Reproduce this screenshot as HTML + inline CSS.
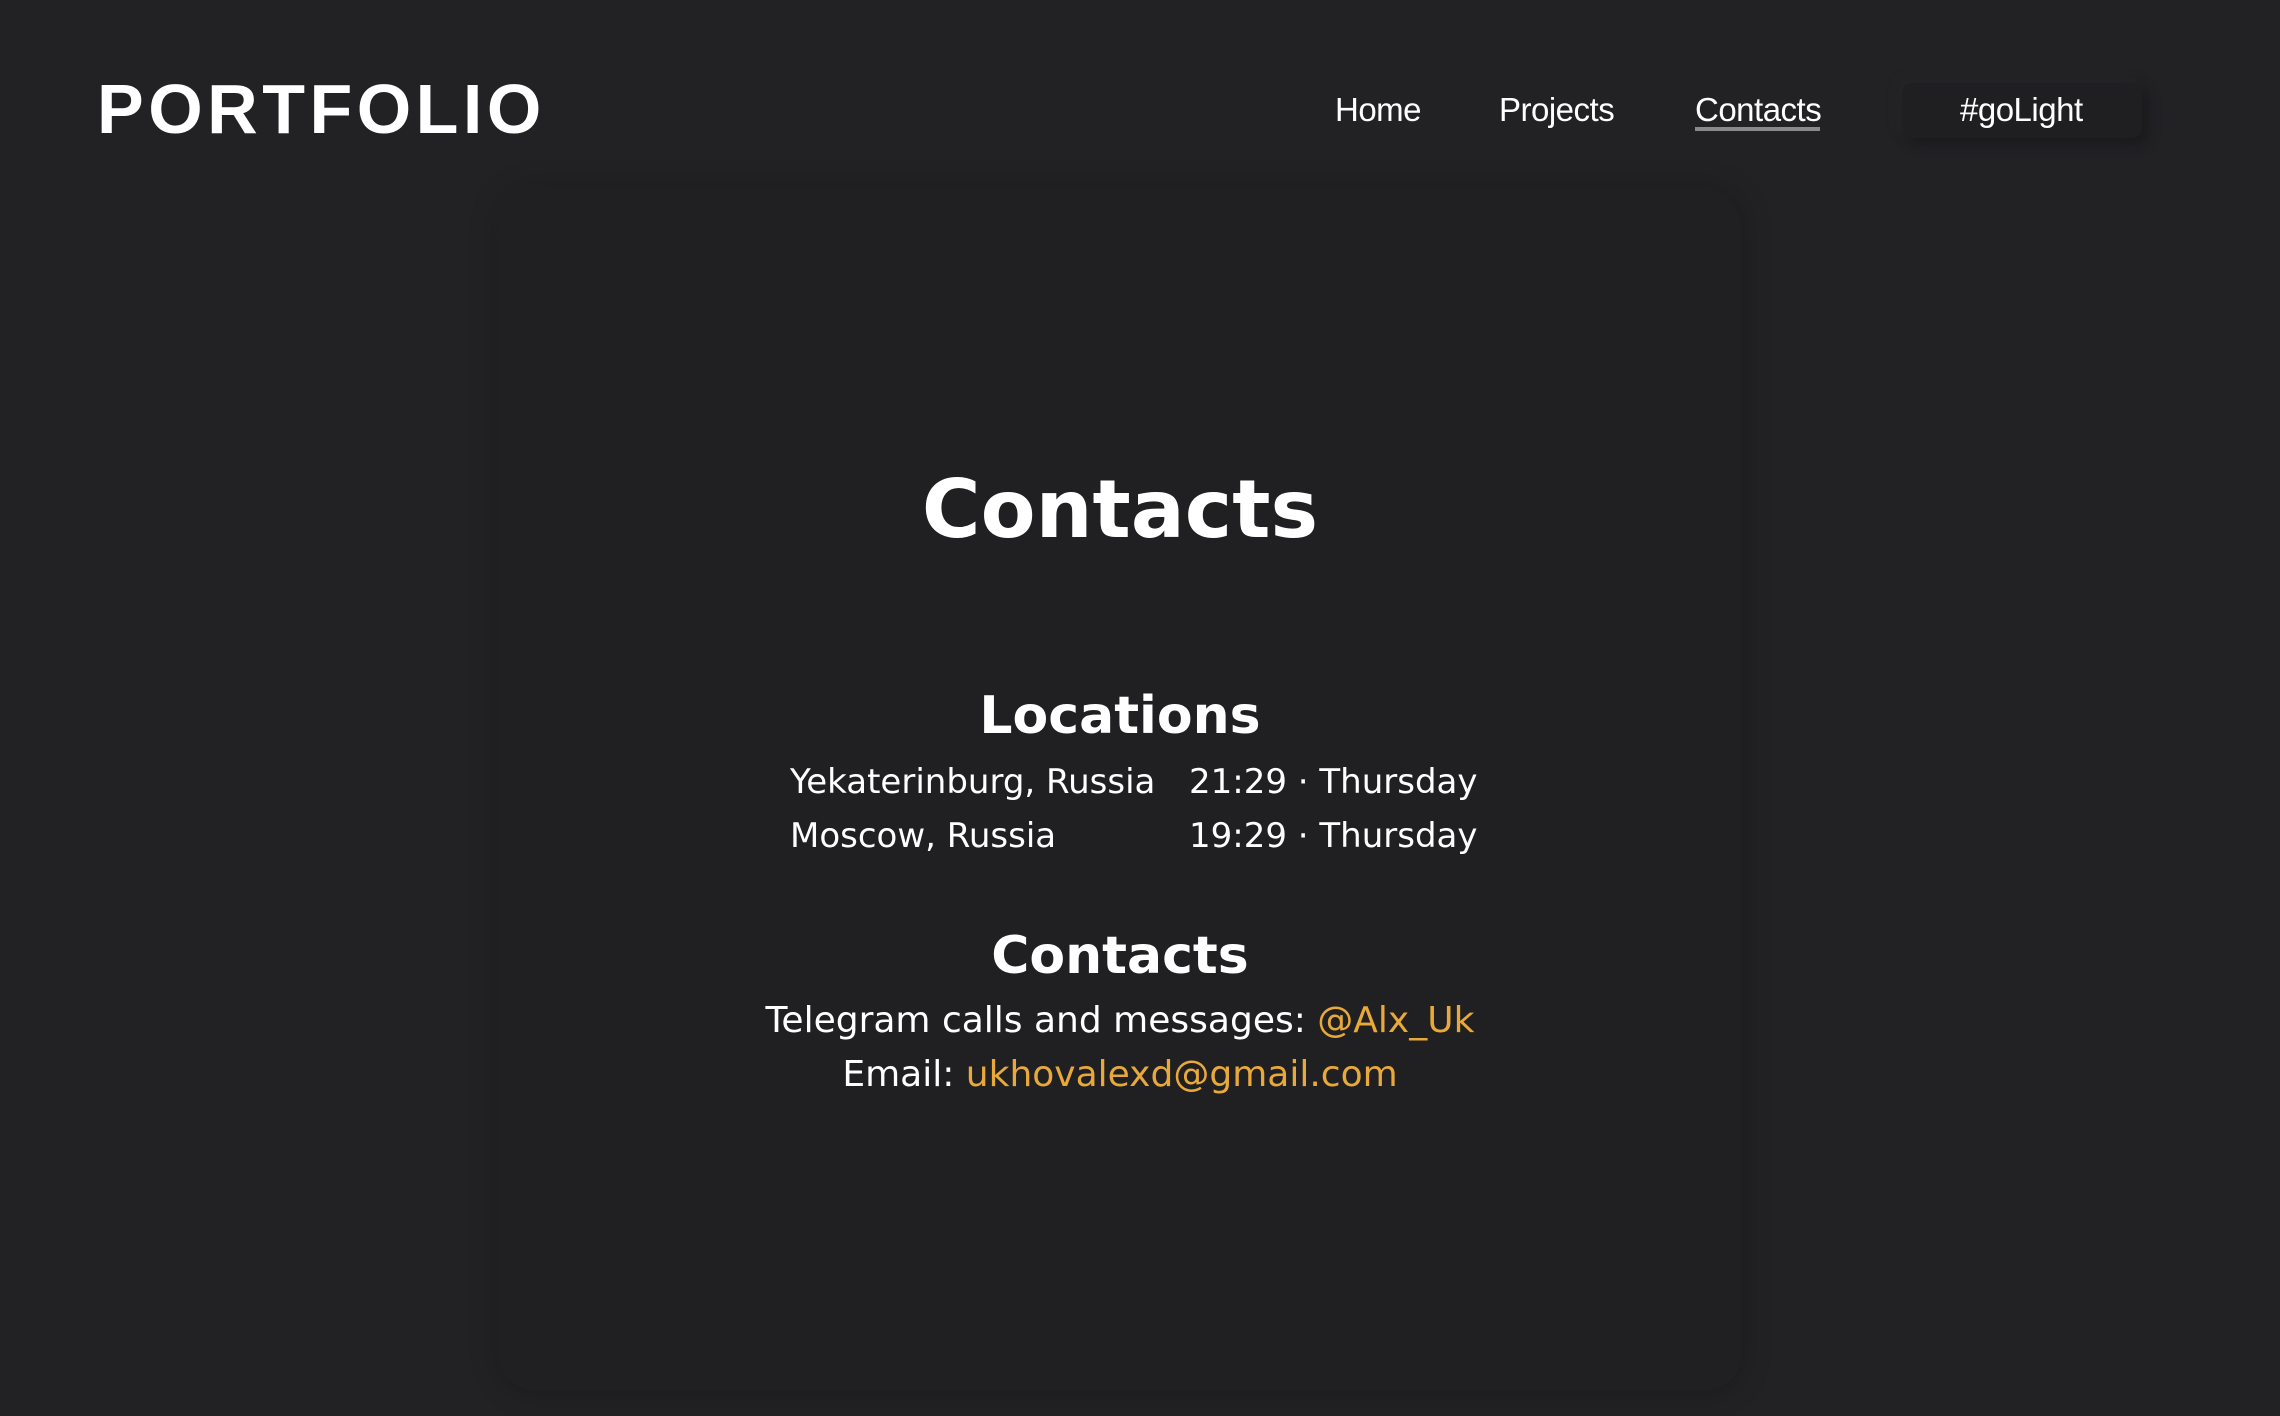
<!DOCTYPE html>
<html><head><meta charset="utf-8"><style>
*{margin:0;padding:0;box-sizing:border-box}
html,body{width:2280px;height:1416px;background:#222225;overflow:hidden;font-family:"DejaVu Sans","Liberation Sans",sans-serif;color:#fff}
.logo{position:absolute;left:97px;top:74px;font-family:"Liberation Sans",sans-serif;font-weight:bold;font-size:70px;letter-spacing:4.5px;line-height:1}
.nav{position:absolute;top:90px;font-family:"Liberation Sans",sans-serif;font-size:33px;line-height:40px;letter-spacing:-0.5px}
.ul{position:absolute;left:1695px;top:127px;width:125px;height:4px;background:#8a8a8c}
.btn{position:absolute;left:1902px;top:83px;width:240px;height:55px;border-radius:10px;background:#1f1f21;box-shadow:6px 6px 12px #1a1a1c,-4px -4px 10px #27272a}
.card{position:absolute;left:500px;top:190px;width:1241px;height:1201px;border-radius:36px;background:#202023;box-shadow:0 0 30px rgba(0,0,0,.25),-4px -4px 14px rgba(255,255,255,.02)}
.c{position:absolute;left:0;width:2240px;text-align:center;line-height:1;white-space:nowrap}
.h1{font-weight:bold;font-size:80px;top:470px}
.h2{font-weight:bold;font-size:52px}
.t{font-size:36px}
.o{color:#e8a93a}
.abs{position:absolute;font-size:34px;line-height:1;white-space:nowrap}
</style></head><body>
<div class="logo">PORTFOLIO</div>
<div class="nav" style="left:1335px">Home</div>
<div class="nav" style="left:1499px">Projects</div>
<div class="nav" style="left:1695px">Contacts</div>
<div class="ul"></div>
<div class="btn"></div>
<div class="nav" style="left:1960px">#goLight</div>
<div class="card"></div>
<div class="c h1">Contacts</div>
<div class="c h2" style="top:690px">Locations</div>
<div class="abs" style="left:790px;top:765px">Yekaterinburg, Russia</div>
<div class="abs" style="left:1189px;top:765px">21:29 · Thursday</div>
<div class="abs" style="left:790px;top:819px">Moscow, Russia</div>
<div class="abs" style="left:1189px;top:819px">19:29 · Thursday</div>
<div class="c h2" style="top:930px">Contacts</div>
<div class="c t" style="top:1003px">Telegram calls and messages: <span class="o">@Alx_Uk</span></div>
<div class="c t" style="top:1057px">Email: <span class="o">ukhovalexd@gmail.com</span></div>
</body></html>
